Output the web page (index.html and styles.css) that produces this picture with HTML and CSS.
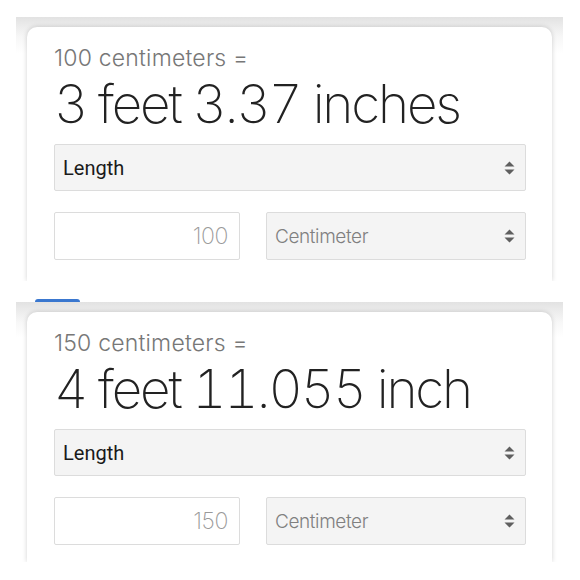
FILE: index.html
```html
<!DOCTYPE html>
<html lang="en">
<head>
    <meta charset="UTF-8">
    <meta name="viewport" content="width=device-width, initial-scale=1.0">
    <title>Unit Converter</title>
    <link rel="stylesheet" href="styles.css">
</head>
<body>
    <div class="panel first">
        <div class="card">
            <div class="from-label">100 centimeters =</div>
            <div class="result">3 feet 3.37 inches</div>
            <div class="select wide">
                <span class="select-text">Length</span>
                <svg class="arrows" width="11" height="14" viewBox="0 0 11 14"><path d="M5.5 0.5 L10.5 5.5 H0.5 Z M0.5 8.5 H10.5 L5.5 13.5 Z" fill="#5f5f5f"/></svg>
            </div>
            <div class="unit-row">
                <input class="amount" type="text" value="100">
                <div class="select unit">
                    <span class="select-text">Centimeter</span>
                    <svg class="arrows" width="11" height="14" viewBox="0 0 11 14"><path d="M5.5 0.5 L10.5 5.5 H0.5 Z M0.5 8.5 H10.5 L5.5 13.5 Z" fill="#5f5f5f"/></svg>
                </div>
            </div>
        </div>
    </div>

    <div class="tab"></div>

    <div class="panel second">
        <div class="card">
            <div class="from-label">150 centimeters =</div>
            <div class="result">4 feet 11.055 inch</div>
            <div class="select wide">
                <span class="select-text">Length</span>
                <svg class="arrows" width="11" height="14" viewBox="0 0 11 14"><path d="M5.5 0.5 L10.5 5.5 H0.5 Z M0.5 8.5 H10.5 L5.5 13.5 Z" fill="#5f5f5f"/></svg>
            </div>
            <div class="unit-row">
                <input class="amount" type="text" value="150">
                <div class="select unit">
                    <span class="select-text">Centimeter</span>
                    <svg class="arrows" width="11" height="14" viewBox="0 0 11 14"><path d="M5.5 0.5 L10.5 5.5 H0.5 Z M0.5 8.5 H10.5 L5.5 13.5 Z" fill="#5f5f5f"/></svg>
                </div>
            </div>
        </div>
    </div>
</body>
</html>
```

FILE: styles.css
```css
body, html {
    margin: 0;
    padding: 0;
    background-color: #fff;
    font-family: Roboto, "Noto Sans", Arial, sans-serif;
}
.panel {
    margin: 0 17px 0 16px;
    padding: 10px 11px 0 11px;
    overflow: hidden;
    box-sizing: border-box;
    background: linear-gradient(to bottom, #e2e2e2 0, #ececec 9px, #f7f7f7 20px, #fff 36px);
}
.first {
    margin-top: 17px;
    height: 264px;
}
.second {
    height: 260px;
}
.tab {
    width: 45px;
    height: 3px;
    margin: 18px 0 0 35px;
    background-color: #3a77cf;
    border-radius: 3px 3px 0 0;
}
.card {
    height: 100%;
    background-color: #fff;
    border-radius: 10px 10px 0 0;
    box-shadow: 0 0 5px rgba(0, 0, 0, 0.18);
    padding: 17px 26px 0 27px;
    box-sizing: border-box;
}
/* no Roboto Light here, Inter's light cuts are the closest */
.from-label {
    font-family: Inter, Roboto, sans-serif;
    font-weight: 300;
    font-size: 23px;
    line-height: 28px;
    letter-spacing: 0.2px;
    color: #777;
}
.result {
    margin-top: 2px;
    font-family: Inter, Roboto, sans-serif;
    font-weight: 200;
    font-size: 53px;
    line-height: 60px;
    letter-spacing: -2.2px;
    font-variant-numeric: tabular-nums;
    color: #222;
    white-space: nowrap;
}
.select {
    display: flex;
    align-items: center;
    justify-content: space-between;
    box-sizing: border-box;
    background-color: #f4f4f4;
    border: 1px solid #dcdcdc;
    border-radius: 2px;
    padding: 0 10px 0 8px;
}
.wide {
    margin-top: 10px;
    height: 47px;
}
.select-text {
    font-size: 20px;
    color: #1a1a1a;
}
.unit-row {
    display: flex;
    gap: 26px;
    margin-top: 21px;
}
.amount {
    width: 186px;
    height: 48px;
    box-sizing: border-box;
    border: 1px solid #dcdcdc;
    border-radius: 2px;
    padding: 0 11px;
    text-align: right;
    font-family: Inter, Roboto, sans-serif;
    font-weight: 200;
    font-size: 23px;
    letter-spacing: -0.4px;
    color: #999;
    outline: none;
}
.unit {
    flex: 1;
    height: 48px;
}
.unit .select-text {
    font-family: Inter, Roboto, sans-serif;
    font-weight: 300;
    font-size: 19px;
    letter-spacing: -0.4px;
    color: #808080;
}
.arrows {
    display: block;
}
```
